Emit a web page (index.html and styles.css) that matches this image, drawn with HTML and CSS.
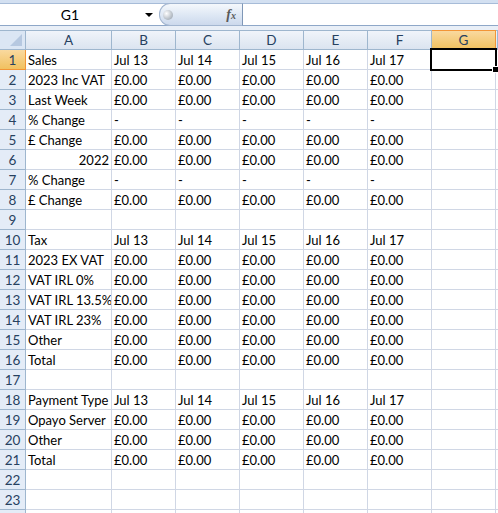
FILE: index.html
```html
<!DOCTYPE html>
<html lang="en">
<head>
  <meta charset="UTF-8">
  <title>Sheet1</title>
  <link rel="stylesheet" href="styles.css">
</head>
<body>
  <div class="ribbon-edge"></div>
  <div class="fbar">
    <div class="namebox">
      <span class="name">G1</span>
      <span class="arrow"></span>
    </div>
    <div class="fx-btn">
      <span class="grip"></span>
      <span class="fx">f<sub>x</sub></span>
    </div>
    <div class="formula"></div>
  </div>
  <div class="fgap"></div>

  <div class="sheet">
    <div class="row head">
      <div class="corner"></div>
      <div class="ch a">A</div><div class="ch">B</div><div class="ch">C</div><div class="ch">D</div><div class="ch">E</div><div class="ch">F</div><div class="ch on">G</div><div class="ch rest"></div>
    </div>
    <div class="row">
      <div class="rh on">1</div>
      <div class="c a">Sales</div><div class="c">Jul 13</div><div class="c">Jul 14</div><div class="c">Jul 15</div><div class="c">Jul 16</div><div class="c">Jul 17</div>
      <div class="c active"><span class="sel"><span class="handle"></span></span></div><div class="c rest"></div>
    </div>
    <div class="row">
      <div class="rh">2</div>
      <div class="c a">2023 Inc VAT</div><div class="c">£0.00</div><div class="c">£0.00</div><div class="c">£0.00</div><div class="c">£0.00</div><div class="c">£0.00</div><div class="c"></div><div class="c rest"></div>
    </div>
    <div class="row">
      <div class="rh">3</div>
      <div class="c a">Last Week</div><div class="c">£0.00</div><div class="c">£0.00</div><div class="c">£0.00</div><div class="c">£0.00</div><div class="c">£0.00</div><div class="c"></div><div class="c rest"></div>
    </div>
    <div class="row">
      <div class="rh">4</div>
      <div class="c a">% Change</div><div class="c">-</div><div class="c">-</div><div class="c">-</div><div class="c">-</div><div class="c">-</div><div class="c"></div><div class="c rest"></div>
    </div>
    <div class="row">
      <div class="rh">5</div>
      <div class="c a">£ Change</div><div class="c">£0.00</div><div class="c">£0.00</div><div class="c">£0.00</div><div class="c">£0.00</div><div class="c">£0.00</div><div class="c"></div><div class="c rest"></div>
    </div>
    <div class="row">
      <div class="rh">6</div>
      <div class="c a num">2022</div><div class="c">£0.00</div><div class="c">£0.00</div><div class="c">£0.00</div><div class="c">£0.00</div><div class="c">£0.00</div><div class="c"></div><div class="c rest"></div>
    </div>
    <div class="row">
      <div class="rh">7</div>
      <div class="c a">% Change</div><div class="c">-</div><div class="c">-</div><div class="c">-</div><div class="c">-</div><div class="c">-</div><div class="c"></div><div class="c rest"></div>
    </div>
    <div class="row">
      <div class="rh">8</div>
      <div class="c a">£ Change</div><div class="c">£0.00</div><div class="c">£0.00</div><div class="c">£0.00</div><div class="c">£0.00</div><div class="c">£0.00</div><div class="c"></div><div class="c rest"></div>
    </div>
    <div class="row">
      <div class="rh">9</div>
      <div class="c a"></div><div class="c"></div><div class="c"></div><div class="c"></div><div class="c"></div><div class="c"></div><div class="c"></div><div class="c rest"></div>
    </div>
    <div class="row">
      <div class="rh">10</div>
      <div class="c a">Tax</div><div class="c">Jul 13</div><div class="c">Jul 14</div><div class="c">Jul 15</div><div class="c">Jul 16</div><div class="c">Jul 17</div><div class="c"></div><div class="c rest"></div>
    </div>
    <div class="row">
      <div class="rh">11</div>
      <div class="c a">2023 EX VAT</div><div class="c">£0.00</div><div class="c">£0.00</div><div class="c">£0.00</div><div class="c">£0.00</div><div class="c">£0.00</div><div class="c"></div><div class="c rest"></div>
    </div>
    <div class="row">
      <div class="rh">12</div>
      <div class="c a">VAT IRL 0%</div><div class="c">£0.00</div><div class="c">£0.00</div><div class="c">£0.00</div><div class="c">£0.00</div><div class="c">£0.00</div><div class="c"></div><div class="c rest"></div>
    </div>
    <div class="row">
      <div class="rh">13</div>
      <div class="c a">VAT IRL 13.5%</div><div class="c">£0.00</div><div class="c">£0.00</div><div class="c">£0.00</div><div class="c">£0.00</div><div class="c">£0.00</div><div class="c"></div><div class="c rest"></div>
    </div>
    <div class="row">
      <div class="rh">14</div>
      <div class="c a">VAT IRL 23%</div><div class="c">£0.00</div><div class="c">£0.00</div><div class="c">£0.00</div><div class="c">£0.00</div><div class="c">£0.00</div><div class="c"></div><div class="c rest"></div>
    </div>
    <div class="row">
      <div class="rh">15</div>
      <div class="c a">Other</div><div class="c">£0.00</div><div class="c">£0.00</div><div class="c">£0.00</div><div class="c">£0.00</div><div class="c">£0.00</div><div class="c"></div><div class="c rest"></div>
    </div>
    <div class="row">
      <div class="rh">16</div>
      <div class="c a">Total</div><div class="c">£0.00</div><div class="c">£0.00</div><div class="c">£0.00</div><div class="c">£0.00</div><div class="c">£0.00</div><div class="c"></div><div class="c rest"></div>
    </div>
    <div class="row">
      <div class="rh">17</div>
      <div class="c a"></div><div class="c"></div><div class="c"></div><div class="c"></div><div class="c"></div><div class="c"></div><div class="c"></div><div class="c rest"></div>
    </div>
    <div class="row">
      <div class="rh">18</div>
      <div class="c a">Payment Type</div><div class="c">Jul 13</div><div class="c">Jul 14</div><div class="c">Jul 15</div><div class="c">Jul 16</div><div class="c">Jul 17</div><div class="c"></div><div class="c rest"></div>
    </div>
    <div class="row">
      <div class="rh">19</div>
      <div class="c a">Opayo Server</div><div class="c">£0.00</div><div class="c">£0.00</div><div class="c">£0.00</div><div class="c">£0.00</div><div class="c">£0.00</div><div class="c"></div><div class="c rest"></div>
    </div>
    <div class="row">
      <div class="rh">20</div>
      <div class="c a">Other</div><div class="c">£0.00</div><div class="c">£0.00</div><div class="c">£0.00</div><div class="c">£0.00</div><div class="c">£0.00</div><div class="c"></div><div class="c rest"></div>
    </div>
    <div class="row">
      <div class="rh">21</div>
      <div class="c a">Total</div><div class="c">£0.00</div><div class="c">£0.00</div><div class="c">£0.00</div><div class="c">£0.00</div><div class="c">£0.00</div><div class="c"></div><div class="c rest"></div>
    </div>
    <div class="row">
      <div class="rh">22</div>
      <div class="c a"></div><div class="c"></div><div class="c"></div><div class="c"></div><div class="c"></div><div class="c"></div><div class="c"></div><div class="c rest"></div>
    </div>
    <div class="row">
      <div class="rh">23</div>
      <div class="c a"></div><div class="c"></div><div class="c"></div><div class="c"></div><div class="c"></div><div class="c"></div><div class="c"></div><div class="c rest"></div>
    </div>
    <div class="row">
      <div class="rh"></div>
      <div class="c a"></div><div class="c"></div><div class="c"></div><div class="c"></div><div class="c"></div><div class="c"></div><div class="c"></div><div class="c rest"></div>
    </div>
  </div>
</body>
</html>
```

FILE: styles.css
```css
html, body {
  margin: 0;
  height: 100%;
  overflow: hidden;
  background: #fff;
}
body {
  font-family: Lato, "Liberation Sans", sans-serif;
  font-size: 13px;
  color: #000;
}

/* formula bar */
.ribbon-edge {
  height: 3px;
  background: #d3e0f1;
}
.fbar {
  display: flex;
  height: 21px;
  border-top: 1px solid #a7bcd8;
  border-bottom: 1px solid #8ea7c8;
  background: #fff;
}
.namebox {
  width: 155px;
  display: flex;
  align-items: center;
}
.name {
  width: 140px;
  text-align: center;
  font-size: 14px;
}
.arrow {
  width: 0;
  height: 0;
  border-left: 4px solid transparent;
  border-right: 4px solid transparent;
  border-top: 4px solid #000;
  margin-left: 5px;
  margin-top: 1px;
}
.fx-btn {
  width: 84px;
  margin-left: 4px;
  box-sizing: border-box;
  border: 1px solid #a3b6d0;
  border-right: 1px solid #7f97b7;
  border-radius: 11px 0 0 11px;
  background: linear-gradient(#f5f8fc, #dde7f4 55%, #ccd9ec);
  display: flex;
  align-items: center;
  justify-content: space-between;
  padding: 0 6px 0 3px;
  margin-top: -1px;
  margin-bottom: -1px;
}
.grip {
  width: 10px;
  height: 10px;
  border-radius: 50%;
  background: radial-gradient(circle at 35% 35%, #ffffff, #b9c0c8 60%, #8f99a5);
}
.fx {
  font-family: "Liberation Serif", serif;
  font-style: italic;
  font-weight: bold;
  font-size: 14px;
  color: #5a5a5a;
}
.fx sub {
  font-size: 10px;
  vertical-align: 0;
}
.formula {
  flex: 1;
}
.fgap {
  height: 4px;
  background: #e9eff7;
}

/* grid */
.row {
  display: flex;
  height: 20px;
}
.row > div {
  box-sizing: border-box;
  height: 20px;
  flex: none;
}
.c {
  width: 64px;
  border-right: 1px solid #d0d7e5;
  border-bottom: 1px solid #d0d7e5;
  padding: 0 2px;
  line-height: 20px;
  white-space: nowrap;
  overflow: hidden;
}
.c.a {
  width: 86px;
}
.c.num {
  text-align: right;
}
.row > .rest {
  flex: 1;
  width: auto;
}
.active {
  position: relative;
  overflow: visible !important;
}
.sel {
  position: absolute;
  left: -2px;
  top: -2px;
  right: -2px;
  bottom: -2px;
  border: 2px solid #000;
}
.handle {
  position: absolute;
  right: -4px;
  bottom: -4px;
  width: 5px;
  height: 5px;
  background: #000;
  border: 1px solid #fff;
}

.rh {
  width: 26px;
  background: #e4ecf7;
  border-right: 1px solid #9eb6ce;
  border-bottom: 1px solid #9eb6ce;
  color: #27415f;
  text-align: center;
  line-height: 20px;
  font-size: 13.5px;
}
.rh.on {
  background: linear-gradient(#f9d99f, #f1c15f);
  border-color: #f29536;
}

.head > div {
  border-right: 1px solid #9eb6ce;
  border-bottom: 1px solid #9eb6ce;
  border-top: 1px solid #9eb6ce;
  background: linear-gradient(#f0f4fa, #dbe4f0);
}
.ch {
  width: 64px;
  text-align: center;
  color: #27415f;
  line-height: 18px;
  font-size: 13.5px;
}
.ch.a {
  width: 86px;
}
.ch.on {
  background: linear-gradient(#f9d99f, #f1c15f) !important;
  border-color: #f29536 !important;
}
.head > .corner {
  width: 26px;
  position: relative;
  background: #dbe6f4;
}
.corner::after {
  content: "";
  position: absolute;
  right: 3px;
  bottom: 3px;
  width: 0;
  height: 0;
  border-left: 12px solid transparent;
  border-bottom: 12px solid #b6c8e0;
}
```
